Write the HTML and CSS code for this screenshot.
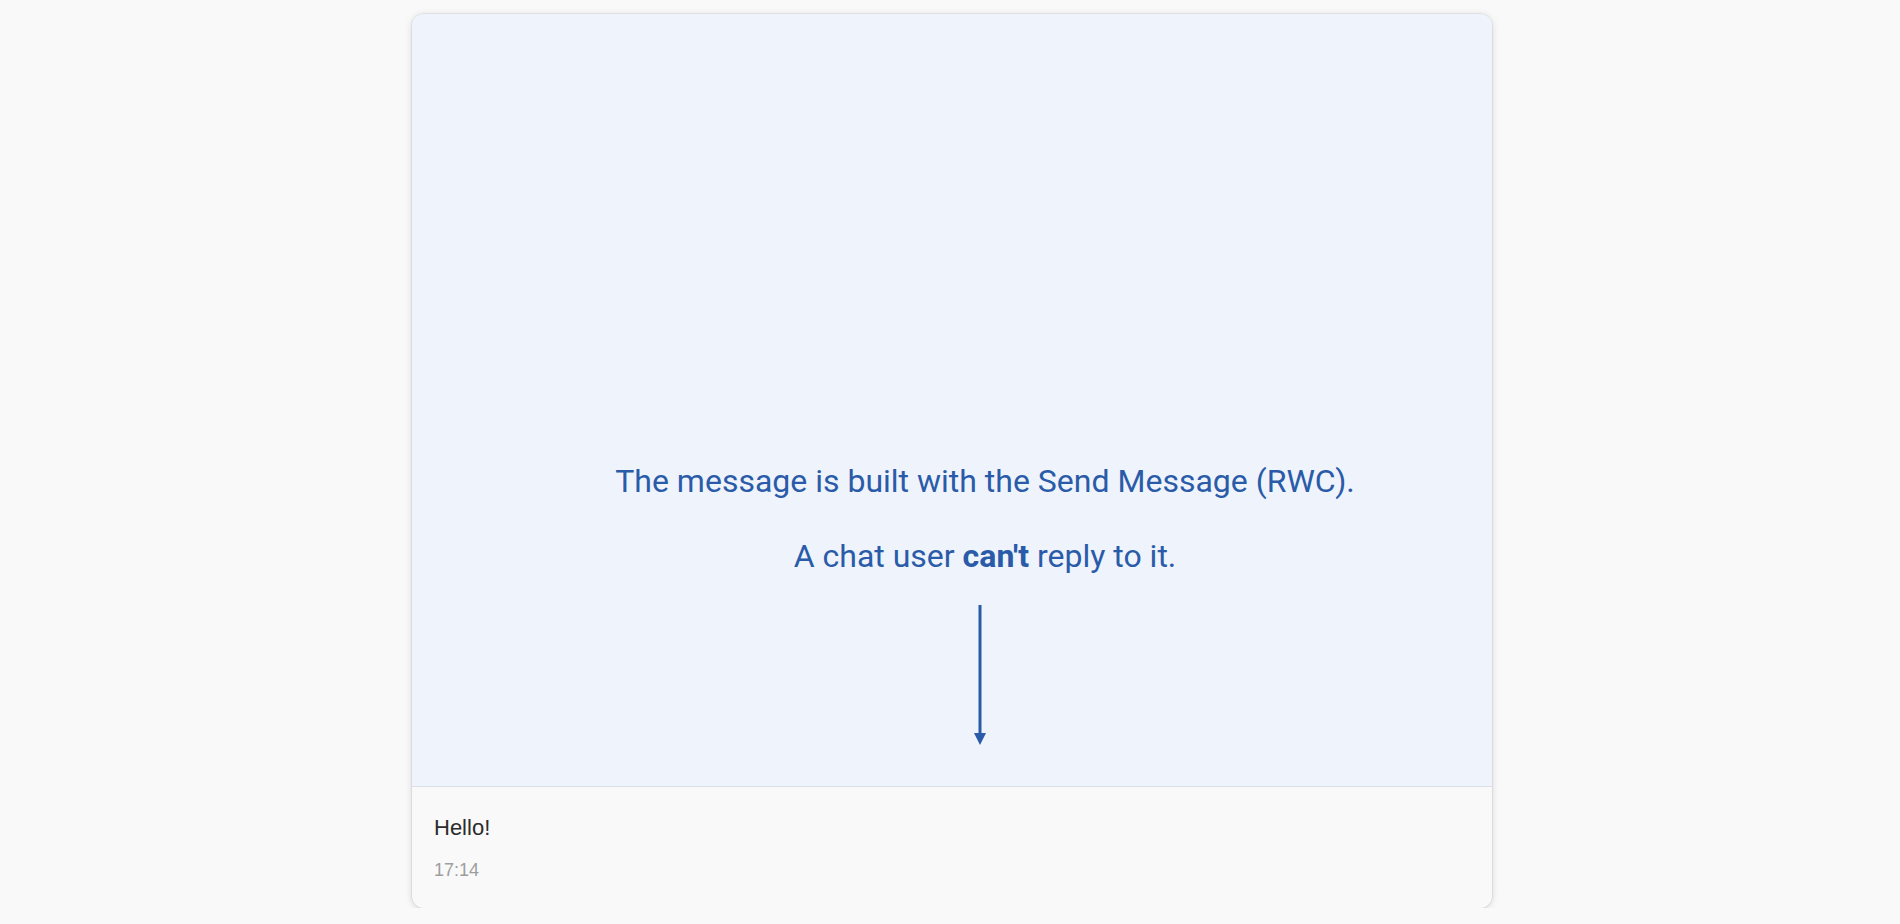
FILE: index.html
```html
<!DOCTYPE html>
<html lang="en">
<head>
<meta charset="utf-8">
<title>Send Message (RWC)</title>
<link rel="stylesheet" href="styles.css">
</head>
<body>
  <main class="card">
    <section class="info">
      <p class="info-line">The message is built with the Send Message (RWC).</p>
      <p class="info-line">A chat user <strong>can't</strong> reply to it.</p>
      <svg class="arrow" width="20" height="140" viewBox="0 0 20 140" aria-hidden="true">
        <rect x="8.5" y="0" width="3" height="129" fill="#2a5ba8"/>
        <polygon points="4,128 16,128 10,140" fill="#2a5ba8"/>
      </svg>
    </section>
    <section class="message">
      <div class="message-text">Hello!</div>
      <div class="message-time">17:14</div>
    </section>
  </main>
</body>
</html>
```
FILE: styles.css
```css
html, body {
  margin: 0;
  padding: 0;
  background: #f9f9f9;
}

body {
  padding: 14px 0 0 4px;
  font-family: "Liberation Sans", Arial, sans-serif;
}

.card {
  width: 1080px;
  margin: 0 auto;
  border-radius: 12px;
  overflow: hidden;
  background: #f9f9f9;
  box-shadow: 0 0 0 1px rgba(0, 0, 0, 0.05), 0 1px 7px rgba(0, 0, 0, 0.15);
}

.info {
  height: 773px;
  box-sizing: border-box;
  background: #eff3fc;
  border-bottom: 1px solid #dcdfe5;
  display: flex;
  flex-direction: column;
  justify-content: flex-end;
  align-items: center;
  padding: 0 0 41px 66px;
}

.info-line {
  margin: 0;
  font-family: Roboto, "Liberation Sans", sans-serif;
  font-size: 32px;
  line-height: 38px;
  color: #2a5ba8;
  text-align: center;
}

.info-line + .info-line {
  margin-top: 37px;
}

.info-line strong {
  font-weight: 700;
}

.arrow {
  display: block;
  margin-top: 30px;
  margin-right: 10px;
}

.message {
  height: 121px;
  box-sizing: border-box;
  padding: 28px 22px 0;
}

.message-text {
  font-size: 22px;
  line-height: 26px;
  color: #2b2b2b;
}

.message-time {
  margin-top: 18px;
  font-size: 18px;
  line-height: 22px;
  color: #9e9e9e;
}
```
